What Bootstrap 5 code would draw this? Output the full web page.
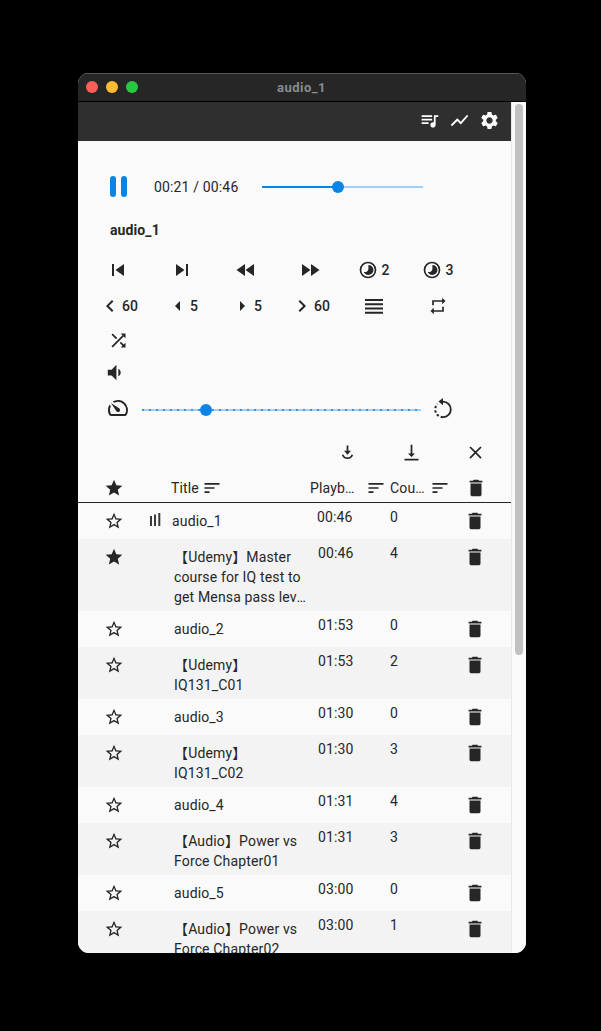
<!DOCTYPE html>
<html lang="en">
<head>
<meta charset="utf-8">
<title>audio_1</title>
<link rel="stylesheet" href="https://cdn.jsdelivr.net/npm/bootstrap@5.3.0/dist/css/bootstrap.min.css">
<style>
html,body{background:#000;margin:0;height:1031px;overflow:hidden}
body{font-family:Roboto,"Noto Sans CJK SC",sans-serif;font-size:14px;color:#262626;letter-spacing:.15px;line-height:20px}
svg{fill:currentColor;display:block;flex:none}
.win{width:448px;height:880px;margin:73px 0 0 78px;border-radius:11px;overflow:hidden;background:#fafafa}
.tbar{height:29px;background:#262626;border-top:1px solid #5a5a5a;border-bottom:1px solid #000;position:relative;color:#8c8c8c;font-weight:700;font-size:13px;letter-spacing:.5px}
.tbar span.ttl{display:block;text-align:center;line-height:27px;padding-right:1px}
.dots{position:absolute;left:8px;top:7px}
.dots i{display:block;width:12px;height:12px;border-radius:50%}
.main{height:851px}
.content{width:433px;overflow:hidden}
.abar{height:39px;background:#2f2f2f;color:#fff;padding-right:11px;padding-bottom:2px;gap:9px}
.gutter{width:15px;background:#fafafa;border-left:1px solid #e8e8e8;padding:2px 3px 0 3px}
.thumb-s{width:8px;height:551px;background:#c1c1c1;border-radius:4px}
.player{height:45px;margin-top:23px;padding-left:32px}
.pause{width:17px;gap:5px}
.pause i{display:block;width:6px;height:21px;background:#0b84e6;border-radius:3px}
.tm{width:135px;padding-left:27px;flex:none;white-space:nowrap}
.track{height:2px;position:relative;background:#a0d0f5}
.track .fill{position:absolute;left:0;top:0;height:2px;background:#0b84e6}
.track .knob{position:absolute;width:12px;height:12px;border-radius:50%;background:#0b84e6;top:-5px;margin-left:-6px}
.track.tick{background:repeating-linear-gradient(90deg,#2e96ec 0 2px,#a0d0f5 2px 7px)}
.nm{padding-left:32px;margin-top:11px;font-weight:700;height:20px;line-height:20px;letter-spacing:.1px}
.grid-c{padding-left:8px;flex-wrap:wrap;width:400px;font-weight:500;margin-top:12px}
.cell{width:64px;height:36px}
.vol{padding-left:25px;height:32px}
.spd{height:44px;padding-left:28px}
.tools{height:40px;padding-left:258.5px}
.c-star{width:72px;flex:none;display:flex;justify-content:center}
.c-ind{width:21px;flex:none}
.c-title{width:139px;flex:none}
.c-time{width:80px;flex:none}
.c-cnt{width:70px;flex:none}
.c-del{width:30px;flex:none;display:flex;justify-content:center;margin-top:-1px}
.hdr{height:31px;border-bottom:1px solid #262626;padding-top:6px;box-sizing:border-box}
.rw{padding-top:8px;box-sizing:border-box;overflow:hidden}
.rw:nth-child(even){background:#f3f3f3}
.rw .pt{margin-top:-4px}
.clamp{display:-webkit-box;-webkit-box-orient:vertical;-webkit-line-clamp:3;overflow:hidden;padding-left:3px}
.r36{height:36px}.r52{height:52px}.r72{height:72px}
.ell{overflow:hidden;text-overflow:ellipsis;white-space:nowrap}
</style>
</head>
<body>
<svg width="0" height="0" style="position:absolute">
<defs>
<symbol id="star" viewBox="0 0 24 24"><path d="M12 17.27L18.18 21l-1.64-7.03L22 9.24l-7.19-.61L12 2 9.19 8.63 2 9.24l5.46 4.73L5.82 21z"/></symbol>
<symbol id="staro" viewBox="0 0 24 24"><path d="M22 9.24l-7.19-.62L12 2 9.19 8.63 2 9.24l5.46 4.73L5.82 21 12 17.27 18.18 21l-1.63-7.03L22 9.24zM12 15.4l-3.76 2.27 1-4.28-3.32-2.88 4.38-.38L12 6.1l1.71 4.04 4.38.38-3.32 2.88 1 4.28L12 15.4z"/></symbol>
<symbol id="del" viewBox="0 0 24 24"><path d="M6 19c0 1.1.9 2 2 2h8c1.1 0 2-.9 2-2V7H6v12zM19 4h-3.5l-1-1h-5l-1 1H5v2h14V4z"/></symbol>
<symbol id="sort" viewBox="0 0 24 24"><path d="M3 18h6v-2H3v2zM3 6v2h18V6H3zm0 7h12v-2H3v2z"/></symbol>
<symbol id="timer" viewBox="0 0 24 24"><path fill-rule="evenodd" d="M12 2a10 10 0 1 0 0 20 10 10 0 0 0 0-20zm0 2a8 8 0 1 1 0 16 8 8 0 0 1 0-16z"/><path d="M12.500 6a6 6 0 0 1 0 12 6 6 0 0 1-5.500-3.600 5 5 0 0 0 5.500-3.400z"/></symbol>
</defs>
</svg>
<div class="win d-flex flex-column">
  <div class="tbar">
    <div class="dots d-flex gap-2"><i style="background:#ff5f57"></i><i style="background:#febc2e"></i><i style="background:#28c840"></i></div>
    <span class="ttl">audio_1</span>
  </div>
  <div class="main d-flex">
    <div class="content d-flex flex-column">
      <div class="abar d-flex justify-content-end align-items-center flex-shrink-0">
        <svg width="21" height="21" viewBox="0 0 24 24"><path d="M15 6H3v2h12V6zm0 4H3v2h12v-2zM3 16h8v-2H3v2zM17 6v8.180c-.31-.11-.65-.18-1-.18-1.660 0-3 1.340-3 3s1.340 3 3 3 3-1.340 3-3V8h3V6h-5z"/></svg>
        <svg width="21" height="21" viewBox="0 0 24 24"><path d="M3.500 18.490l6-6.010 4 4L22 6.920l-1.410-1.410-7.090 7.970-4-4L2 16.990z"/></svg>
        <svg width="21" height="21" viewBox="0 0 24 24"><path d="M19.14 12.94c.04-.3.06-.61.06-.94 0-.32-.02-.64-.07-.94l2.03-1.58c.18-.14.23-.41.12-.61l-1.92-3.32c-.12-.22-.37-.29-.59-.22l-2.39.96c-.5-.38-1.03-.7-1.62-.94l-.36-2.54c-.04-.24-.24-.41-.48-.41h-3.84c-.24 0-.43.17-.47.41l-.36 2.54c-.59.24-1.13.57-1.62.94l-2.39-.96c-.22-.08-.47 0-.59.22L2.74 8.87c-.12.21-.08.47.12.61l2.03 1.58c-.05.3-.09.63-.09.94s.02.64.07.94l-2.03 1.58c-.18.14-.23.41-.12.61l1.92 3.32c.12.22.37.29.59.22l2.39-.96c.5.38 1.03.7 1.62.94l.36 2.54c.05.24.24.41.48.41h3.84c.24 0 .44-.17.47-.41l.36-2.54c.59-.24 1.13-.56 1.62-.94l2.39.96c.22.08.47 0 .59-.22l1.92-3.32c.12-.22.07-.47-.12-.61l-2.01-1.58zM12 15.6c-1.98 0-3.6-1.62-3.6-3.6s1.62-3.6 3.6-3.6 3.6 1.62 3.6 3.6-1.62 3.6-3.6 3.6z"/></svg>
      </div>

      <div class="player d-flex align-items-center flex-shrink-0">
        <div class="pause d-flex flex-shrink-0"><i></i><i></i></div>
        <div class="tm">00:21 / 00:46</div>
        <div class="track" style="width:161px"><div class="fill" style="width:76px"></div><div class="knob" style="left:76px"></div></div>
      </div>
      <div class="nm flex-shrink-0">audio_1</div>

      <div class="grid-c d-flex flex-shrink-0">
        <div class="cell d-flex align-items-center justify-content-center"><svg width="24" height="24" viewBox="0 0 24 24"><path d="M6 6h2v12H6zm3.500 6l8.500 6V6z"/></svg></div>
        <div class="cell d-flex align-items-center justify-content-center"><svg width="24" height="24" viewBox="0 0 24 24"><path d="M6 18l8.500-6L6 6v12zM16 6v12h2V6h-2z"/></svg></div>
        <div class="cell d-flex align-items-center justify-content-center"><svg width="24" height="24" viewBox="0 0 24 24"><path d="M11 18V6l-8.500 6 8.500 6zm.5-6l8.500 6V6l-8.500 6z"/></svg></div>
        <div class="cell d-flex align-items-center justify-content-center"><svg width="24" height="24" viewBox="0 0 24 24"><path d="M4 18l8.500-6L4 6v12zm9-12v12l8.500-6L13 6z"/></svg></div>
        <div class="cell d-flex align-items-center justify-content-center" style="gap:3px"><svg width="20" height="20" viewBox="0 0 24 24"><use href="#timer"/></svg><span>2</span></div>
        <div class="cell d-flex align-items-center justify-content-center" style="gap:3px"><svg width="20" height="20" viewBox="0 0 24 24"><use href="#timer"/></svg><span>3</span></div>

        <div class="cell d-flex align-items-center justify-content-center"><svg width="24" height="24" viewBox="0 0 24 24"><path d="M15.410 7.410L14 6l-6 6 6 6 1.410-1.410L10.830 12z"/></svg><span>60</span></div>
        <div class="cell d-flex align-items-center justify-content-center"><svg width="24" height="24" viewBox="0 0 24 24"><path d="M14 7l-5 5 5 5V7z"/></svg><span>5</span></div>
        <div class="cell d-flex align-items-center justify-content-center"><svg width="24" height="24" viewBox="0 0 24 24"><path d="M10 17l5-5-5-5v10z"/></svg><span>5</span></div>
        <div class="cell d-flex align-items-center justify-content-center"><svg width="24" height="24" viewBox="0 0 24 24"><path d="M10 6L8.590 7.410 13.170 12l-4.580 4.590L10 18l6-6z"/></svg><span>60</span></div>
        <div class="cell d-flex align-items-center justify-content-center"><svg width="24" height="24" viewBox="0 0 24 24"><path d="M3 5h18v2H3zm0 4.300h18v2H3zm0 4.300h18v2H3zm0 4.200h18v2H3z"/></svg></div>
        <div class="cell d-flex align-items-center justify-content-center"><svg width="20" height="20" viewBox="0 0 24 24"><path d="M7 7h10v3l4-4-4-4v3H5v6h2V7zm10 10H7v-3l-4 4 4 4v-3h12v-6h-2v4z"/></svg></div>

        <div class="cell d-flex align-items-center justify-content-center" style="height:32px"><svg width="21" height="21" viewBox="0 0 24 24"><path d="M10.590 9.170L5.410 4 4 5.410l5.170 5.170 1.420-1.410zM14.500 4l2.040 2.040L4 18.590 5.410 20 17.960 7.460 20 9.500V4h-5.500zm.33 9.410l-1.410 1.410 3.130 3.130L14.500 20H20v-5.500l-2.040 2.040-3.130-3.130z"/></svg></div>
      </div>

      <div class="vol d-flex align-items-center flex-shrink-0">
        <svg width="23" height="23" viewBox="0 0 24 24"><path d="M18.500 12c0-1.770-1.020-3.290-2.500-4.030v8.050c1.480-.73 2.500-2.250 2.500-4.020zM5 9v6h4l5 5V4L9 9H5z"/></svg>
      </div>
      <div class="spd d-flex align-items-center flex-shrink-0">
        <svg width="24" height="24" viewBox="0 0 24 24" style="transform:scaleX(-1);margin-top:-4px"><path d="M20.380 8.570l-1.230 1.850a8 8 0 0 1-.22 7.580H5.070A8 8 0 0 1 15.580 6.850l1.850-1.230A10 10 0 0 0 3.350 19a2 2 0 0 0 1.720 1h13.850a2 2 0 0 0 1.740-1 10 10 0 0 0-.27-10.440zm-9.790 6.840a2 2 0 0 0 2.830 0l5.660-8.490-8.490 5.660a2 2 0 0 0 0 2.830z"/></svg>
        <div class="track tick" style="width:279px;margin-left:12px"><div class="knob" style="left:64px"></div></div>
        <svg width="22" height="22" viewBox="0 0 24 24" style="margin-left:11px;margin-top:-5px"><path d="M12 1v8L7 5z"/><path d="M12 5a8.500 8.500 0 0 1 0 17" fill="none" stroke="currentColor" stroke-width="2"/><path d="M12 22a8.500 8.500 0 0 1 -6-14.500" fill="none" stroke="currentColor" stroke-width="2.200" stroke-dasharray="2.600 2.200"/></svg>
      </div>

      <div class="tools d-flex align-items-center flex-shrink-0">
        <svg width="21" height="21" viewBox="0 0 24 24" style="margin-right:43px"><path d="M11 4h2v6h3l-4 4.500L8 10h3z"/><path d="M6.500 14.500a5.800 5.800 0 0 0 11 0" fill="none" stroke="currentColor" stroke-width="2"/></svg>
        <svg width="21" height="21" viewBox="0 0 24 24" style="margin-right:43px"><path d="M16 13h-3V3h-2v10H8l4 4 4-4zM4 19v2h16v-2H4z"/></svg>
        <svg width="21" height="21" viewBox="0 0 24 24"><path d="M19 6.410L17.590 5 12 10.590 6.410 5 5 6.410 10.590 12 5 17.590 6.410 19 12 13.410 17.590 19 19 17.590 13.410 12z"/></svg>
      </div>

      <div class="hdr d-flex flex-shrink-0">
        <div class="c-star"><svg width="20" height="20" viewBox="0 0 24 24"><use href="#star"/></svg></div>
        <div class="c-ind"></div>
        <div class="c-title d-flex align-items-start" style="gap:3px"><span>Title</span><svg width="20" height="20" viewBox="0 0 24 24"><use href="#sort"/></svg></div>
        <div class="c-time d-flex" style="gap:7px"><span class="ell" style="width:49px">Playback</span><svg width="20" height="20" viewBox="0 0 24 24"><use href="#sort"/></svg></div>
        <div class="c-cnt d-flex" style="gap:5px"><span class="ell" style="width:35px">Count</span><svg width="20" height="20" viewBox="0 0 24 24"><use href="#sort"/></svg></div>
        <div class="c-del" style="padding-left:2px"><svg width="22" height="22" viewBox="0 0 24 24"><use href="#del"/></svg></div>
      </div>

      <div class="list-rows">
        <div class="rw r36 d-flex"><div class="c-star"><svg width="20" height="20" viewBox="0 0 24 24"><use href="#staro"/></svg></div><div class="c-ind"><svg width="14" height="20" viewBox="0 0 14 20" style="color:#3a3a3a"><path d="M0 5h2v10H0zm4-1.500h2V15H4zM8.300 2h2v13h-2z"/></svg></div><div class="c-title"><div class="ell" style="padding-left:1px">audio_1</div></div><div class="c-time pt" style="padding-left:7px">00:46</div><div class="c-cnt pt">0</div><div class="c-del"><svg width="22" height="22" viewBox="0 0 24 24"><use href="#del"/></svg></div></div>
        <div class="rw r72 d-flex"><div class="c-star"><svg width="20" height="20" viewBox="0 0 24 24"><use href="#star"/></svg></div><div class="c-ind"></div><div class="c-title"><div class="clamp">【Udemy】Master course for IQ test to get Mensa pass level with detailed answers</div></div><div class="c-time pt" style="padding-left:8px">00:46</div><div class="c-cnt pt">4</div><div class="c-del"><svg width="22" height="22" viewBox="0 0 24 24"><use href="#del"/></svg></div></div>
        <div class="rw r36 d-flex"><div class="c-star"><svg width="20" height="20" viewBox="0 0 24 24"><use href="#staro"/></svg></div><div class="c-ind"></div><div class="c-title"><div class="clamp">audio_2</div></div><div class="c-time pt" style="padding-left:8px">01:53</div><div class="c-cnt pt">0</div><div class="c-del"><svg width="22" height="22" viewBox="0 0 24 24"><use href="#del"/></svg></div></div>
        <div class="rw r52 d-flex"><div class="c-star"><svg width="20" height="20" viewBox="0 0 24 24"><use href="#staro"/></svg></div><div class="c-ind"></div><div class="c-title"><div class="clamp">【Udemy】<br>IQ131_C01</div></div><div class="c-time pt" style="padding-left:8px">01:53</div><div class="c-cnt pt">2</div><div class="c-del"><svg width="22" height="22" viewBox="0 0 24 24"><use href="#del"/></svg></div></div>
        <div class="rw r36 d-flex"><div class="c-star"><svg width="20" height="20" viewBox="0 0 24 24"><use href="#staro"/></svg></div><div class="c-ind"></div><div class="c-title"><div class="clamp">audio_3</div></div><div class="c-time pt" style="padding-left:8px">01:30</div><div class="c-cnt pt">0</div><div class="c-del"><svg width="22" height="22" viewBox="0 0 24 24"><use href="#del"/></svg></div></div>
        <div class="rw r52 d-flex"><div class="c-star"><svg width="20" height="20" viewBox="0 0 24 24"><use href="#staro"/></svg></div><div class="c-ind"></div><div class="c-title"><div class="clamp">【Udemy】<br>IQ131_C02</div></div><div class="c-time pt" style="padding-left:8px">01:30</div><div class="c-cnt pt">3</div><div class="c-del"><svg width="22" height="22" viewBox="0 0 24 24"><use href="#del"/></svg></div></div>
        <div class="rw r36 d-flex"><div class="c-star"><svg width="20" height="20" viewBox="0 0 24 24"><use href="#staro"/></svg></div><div class="c-ind"></div><div class="c-title"><div class="clamp">audio_4</div></div><div class="c-time pt" style="padding-left:8px">01:31</div><div class="c-cnt pt">4</div><div class="c-del"><svg width="22" height="22" viewBox="0 0 24 24"><use href="#del"/></svg></div></div>
        <div class="rw r52 d-flex"><div class="c-star"><svg width="20" height="20" viewBox="0 0 24 24"><use href="#staro"/></svg></div><div class="c-ind"></div><div class="c-title"><div class="clamp">【Audio】Power vs Force Chapter01</div></div><div class="c-time pt" style="padding-left:8px">01:31</div><div class="c-cnt pt">3</div><div class="c-del"><svg width="22" height="22" viewBox="0 0 24 24"><use href="#del"/></svg></div></div>
        <div class="rw r36 d-flex"><div class="c-star"><svg width="20" height="20" viewBox="0 0 24 24"><use href="#staro"/></svg></div><div class="c-ind"></div><div class="c-title"><div class="clamp">audio_5</div></div><div class="c-time pt" style="padding-left:8px">03:00</div><div class="c-cnt pt">0</div><div class="c-del"><svg width="22" height="22" viewBox="0 0 24 24"><use href="#del"/></svg></div></div>
        <div class="rw r72 d-flex"><div class="c-star"><svg width="20" height="20" viewBox="0 0 24 24"><use href="#staro"/></svg></div><div class="c-ind"></div><div class="c-title"><div class="clamp">【Audio】Power vs Force Chapter02</div></div><div class="c-time pt" style="padding-left:8px">03:00</div><div class="c-cnt pt">1</div><div class="c-del"><svg width="22" height="22" viewBox="0 0 24 24"><use href="#del"/></svg></div></div>
      </div>
    </div>
    <div class="gutter flex-shrink-0"><div class="thumb-s"></div></div>
  </div>
</div>
</body>
</html>
